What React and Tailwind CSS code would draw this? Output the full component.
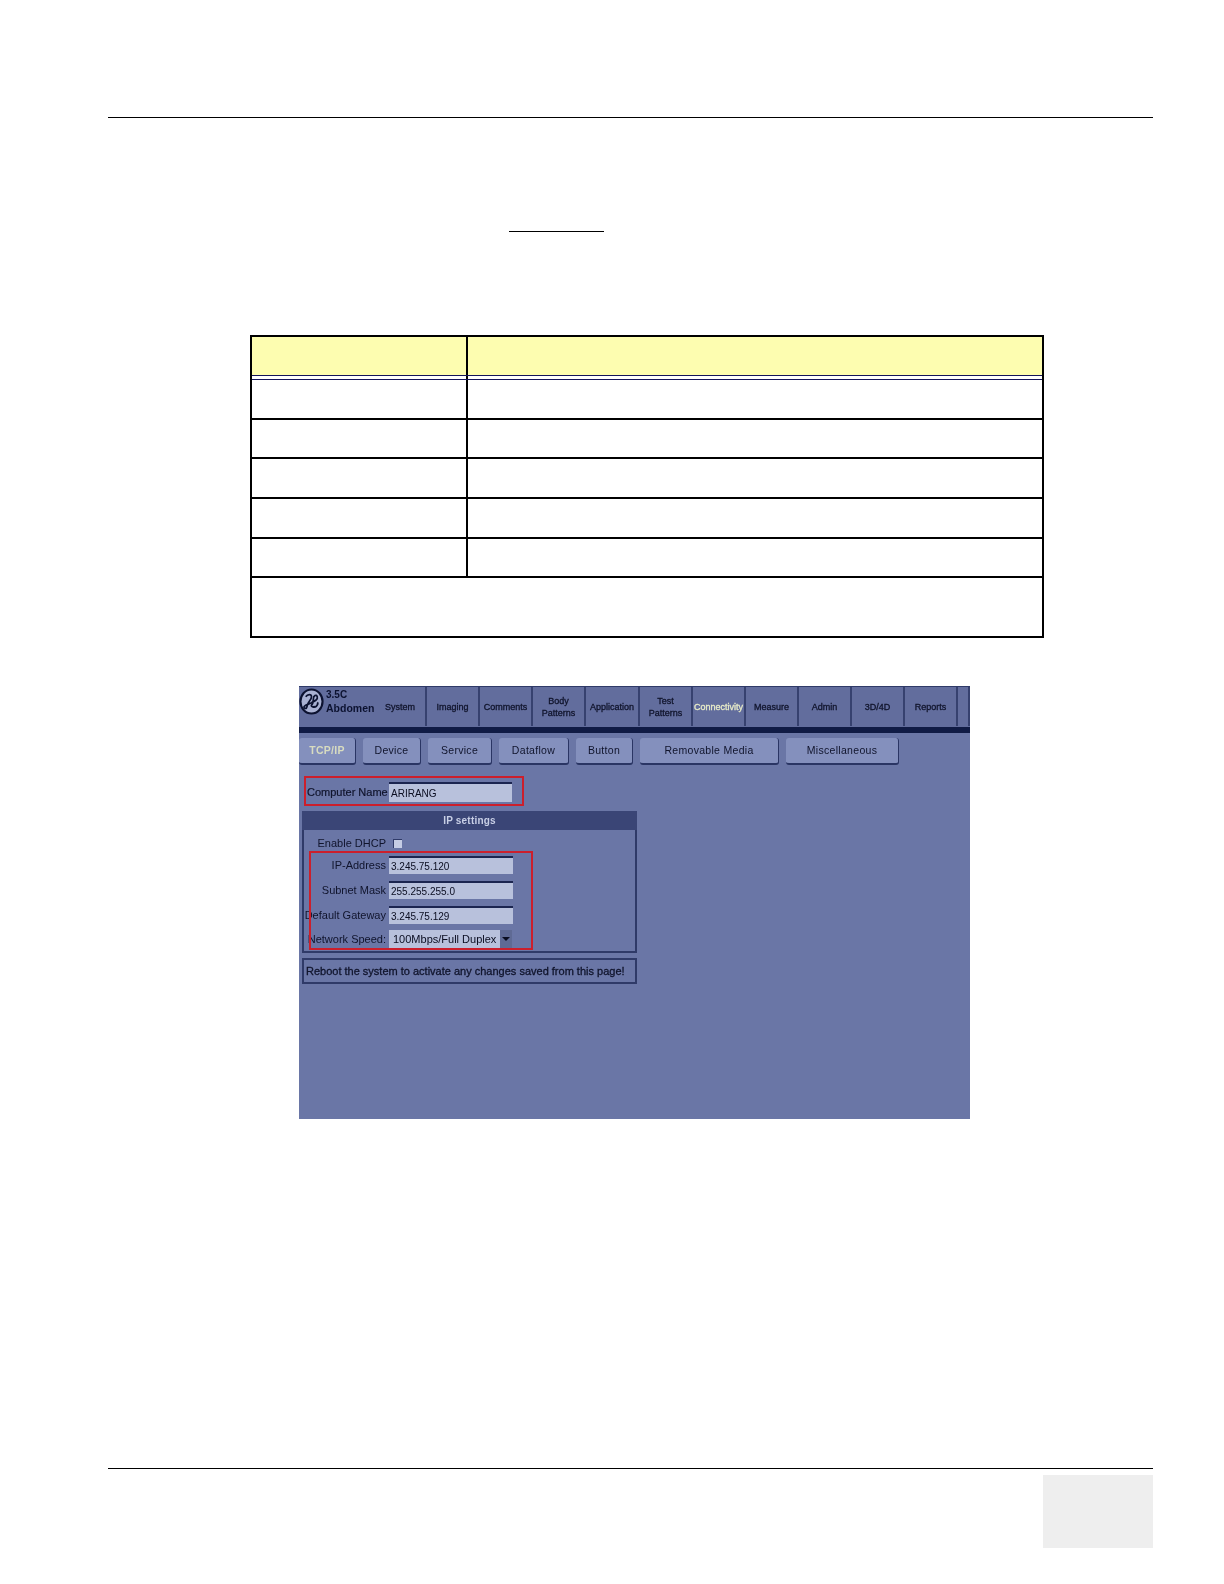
import React from 'react'

const topTabs = [
  { label: 'System', w: 'w-[52px]' },
  { label: 'Imaging', w: 'w-[53px]' },
  { label: 'Comments', w: 'w-[53px]' },
  { label: ['Body', 'Patterns'], w: 'w-[53px]' },
  { label: 'Application', w: 'w-[54px]' },
  { label: ['Test', 'Patterns'], w: 'w-[53px]' },
  { label: 'Connectivity', w: 'w-[53px]', active: true },
  { label: 'Measure', w: 'w-[53px]' },
  { label: 'Admin', w: 'w-[53px]' },
  { label: '3D/4D', w: 'w-[53px]' },
  { label: 'Reports', w: 'w-[53px]' },
  { label: '', w: 'w-[12px]' },
]

const subTabs = [
  { label: 'TCP/IP', w: 'w-[57px]', active: true },
  { label: 'Device', w: 'w-[58px]' },
  { label: 'Service', w: 'w-[64px]' },
  { label: 'Dataflow', w: 'w-[70px]' },
  { label: 'Button', w: 'w-[57px]' },
  { label: 'Removable Media', w: 'w-[139px]' },
  { label: 'Miscellaneous', w: 'w-[113px]' },
]

const fields = [
  { label: 'IP-Address', value: '3.245.75.120' },
  { label: 'Subnet Mask', value: '255.255.255.0' },
  { label: 'Default Gateway', value: '3.245.75.129' },
]

function GeLogo() {
  return (
    <svg viewBox="0 0 26 28" className="w-[25px] h-[27px] shrink-0" fill="none" stroke="#0c1230">
      <ellipse cx="13" cy="14" rx="11.5" ry="12.5" fill="#a9b1d2" strokeWidth="2.2" />
      <path d="M7 9c2-3 6-3 6 0s-3 5-4 8-1 5-3 4 0-3 3-4l5-2" strokeWidth="1.8" />
      <path d="M13 15c3-1 7-3 6-6s-4-1-4 2-1 6-2 7 3 3 5 1 2-3 1-4" strokeWidth="1.8" />
    </svg>
  )
}

function TopTab({ tab }) {
  return (
    <div className={`${tab.w} h-[39px] shrink-0 flex flex-col items-center justify-center bg-[#626d9d] border-r-2 border-[#36416f] text-[9px] leading-[12px] [-webkit-text-stroke:0.3px_currentColor] ${tab.active ? 'text-[#e8ecc8]' : 'text-[#10142c]'}`}>
      {[].concat(tab.label).map((line) => (
        <span key={line}>{line}</span>
      ))}
    </div>
  )
}

function SubTab({ tab }) {
  return (
    <div className={`${tab.w} h-[27px] shrink-0 flex items-center justify-center rounded-[3px] bg-[#8490bd] border-b-2 border-r border-[#2a3564] text-[10.5px] tracking-[0.3px] ${tab.active ? 'text-[#d8dcc0] font-bold' : 'text-[#10142c]'}`}>
      {tab.label}
    </div>
  )
}

function FieldRow({ label, value }) {
  return (
    <div className="flex items-center h-[18px]">
      <span className="w-[85px] shrink-0 text-right pr-[3px] whitespace-nowrap text-[11px] text-[#10142c]">{label}</span>
      <div className="w-[124px] h-full flex items-center pl-[2px] bg-[#b8c1dc] border-t-2 border-[#1b2550] text-[10px] text-[#0a0d20]">{value}</div>
    </div>
  )
}

function ScannerScreen() {
  return (
    <div className="w-[671px] h-[433px] ml-[299px] relative font-['Liberation_Sans',Arial,sans-serif]">
      <div className="h-full bg-[#6a76a6] overflow-hidden blur-[0.4px]">
        {/* top menu */}
        <div className="flex items-start h-[41px] bg-[#626d9d] border-t border-[#2f3a68]">
          <div className="w-[76px] shrink-0 flex items-center gap-[2px] pt-[1px]">
            <GeLogo />
            <div className="text-[#0c1230] font-bold">
              <div className="text-[10px] leading-[13px]">3.5C</div>
              <div className="text-[10.5px] leading-[14px] whitespace-nowrap">Abdomen</div>
            </div>
          </div>
          <div className="flex">
            {topTabs.map((tab) => (
              <TopTab key={tab.w + tab.label} tab={tab} />
            ))}
          </div>
        </div>
        <div className="h-[6px] bg-[#101b45]" />

        {/* sub tabs */}
        <div className="flex gap-[7px] mt-[5px]">
          {subTabs.map((tab) => (
            <SubTab key={tab.label} tab={tab} />
          ))}
        </div>

        {/* computer name */}
        <div className="flex items-center h-[20px] mt-[17px] ml-[8px]">
          <span className="w-[82px] shrink-0 whitespace-nowrap text-[11px] text-[#10142c] [-webkit-text-stroke:0.2px_#10142c]">Computer Name</span>
          <div className="w-[123px] h-full flex items-center pl-[2px] bg-[#b8c1dc] border-t-2 border-[#1b2550] text-[10px] text-[#0a0d20]">ARIRANG</div>
        </div>

        {/* ip settings */}
        <div className="w-[335px] h-[142px] mt-[9px] ml-[3px] border-2 border-t-0 border-[#2f3a68]">
          <div className="h-[19px] -mx-[2px] flex items-center justify-center bg-[#3a4576] text-[10px] font-bold tracking-[0.2px] text-[#c8cfe6]">IP settings</div>
          <div className="flex items-center h-[9px] mt-[9px]">
            <span className="w-[89px] shrink-0 text-right pr-[7px] whitespace-nowrap text-[11px] text-[#10142c]">Enable DHCP</span>
            <div className="w-[9px] h-[9px] bg-[#c5cce4] border-t border-l border-[#2f3a68]" />
          </div>
          <div className="flex flex-col gap-[7px] mt-[8px]">
            {fields.map((f) => (
              <FieldRow key={f.label} label={f.label} value={f.value} />
            ))}
            <div className="flex items-center h-[18px] -mt-px">
              <span className="w-[85px] shrink-0 text-right pr-[3px] whitespace-nowrap text-[11px] text-[#10142c]">Network Speed:</span>
              <div className="w-[123px] h-full flex items-center justify-between pl-[4px] bg-[#b8c1dc] text-[11px] text-[#0a0d20]">
                <span className="whitespace-nowrap">100Mbps/Full Duplex</span>
                <div className="w-[12px] h-full flex items-center justify-center bg-[#5f6a94]">
                  <div className="w-0 h-0 border-x-[4px] border-x-transparent border-t-[4px] border-t-[#0a0d20]" />
                </div>
              </div>
            </div>
          </div>
        </div>

        {/* reboot note */}
        <div className="w-[335px] h-[26px] mt-[5px] ml-[3px] flex items-center pl-[2px] border-2 border-[#2f3a68] text-[11px] text-[#10142c] whitespace-nowrap [-webkit-text-stroke:0.3px_#10142c]">
          Reboot the system to activate any changes saved from this page!
        </div>
      </div>

      {/* red callouts */}
      <div className="absolute left-[5px] top-[90px] w-[220px] h-[30px] border-2 border-[#cc1f2c]" />
      <div className="absolute left-[10px] top-[165px] w-[224px] h-[99px] border-2 border-[#cc1f2c]" />
    </div>
  )
}

function SpecRow() {
  return (
    <div className="flex h-[39.7px] border-b-2 border-black">
      <div className="w-[216px] shrink-0 border-r-2 border-black" />
      <div className="flex-1" />
    </div>
  )
}

export default function App() {
  return (
    <div className="w-[1224px] h-[1584px] bg-white flex flex-col">
      <div className="h-px mt-[117px] ml-[108px] mr-[71px] bg-black" />

      <div className="w-[95px] h-px mt-[113px] ml-[509px] bg-black" />

      {/* empty spec table */}
      <div className="w-[794px] h-[303px] mt-[103px] ml-[250px] border-2 border-black flex flex-col">
        <div className="flex h-[38px] bg-[#fdfdb0]">
          <div className="w-[216px] shrink-0 border-r-2 border-black" />
          <div className="flex-1" />
        </div>
        <div className="flex h-[5px] shrink-0 border-y border-[#14145a]">
          <div className="w-[216px] shrink-0 border-r-2 border-black" />
        </div>
        <SpecRow />
        <SpecRow />
        <SpecRow />
        <SpecRow />
        <SpecRow />
        <div className="flex-1" />
      </div>

      <div className="mt-[48px]">
        <ScannerScreen />
      </div>

      <div className="h-px mt-[349px] ml-[108px] mr-[71px] bg-black" />

      <div className="w-[110px] h-[73px] mt-[6px] ml-[1043px] bg-[#eeeeee]" />
    </div>
  )
}
